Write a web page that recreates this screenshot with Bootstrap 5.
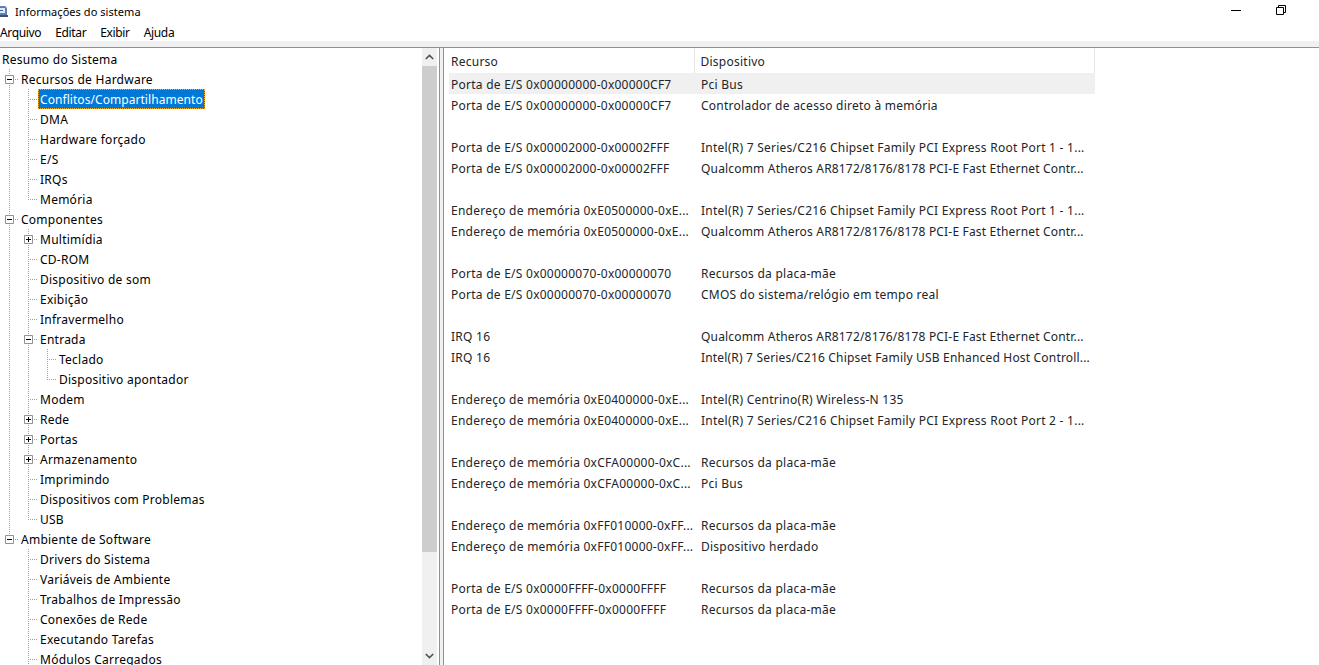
<!DOCTYPE html>
<html lang="pt-BR">
<head>
  <meta charset="UTF-8" />
  <meta name="viewport" content="width=device-width, initial-scale=1.0" />
  <title>Informações do sistema</title>
  <link href="https://cdn.jsdelivr.net/npm/bootstrap@5.3.0/dist/css/bootstrap.min.css" rel="stylesheet" />
  <style>
    html, body { height: 665px; overflow: hidden; }
    body { font-family: "Noto Sans", "Liberation Sans", sans-serif; font-size: 12px; letter-spacing: .25px; color: #000; background: #fff; line-height: 20px; }
    .title-bar { height: 23px; }
    .title-bar .win-title { margin-left: 7px; font-size: 11px; letter-spacing: .05px; }
    .win-btns { gap: 35px; margin-right: 33px; margin-bottom: 4px; }
    .menu-line { height: 18px; gap: 14px; letter-spacing: -.35px; }
    .menu-strip { height: 6px; background: #f0f0f0; }
    .panes { height: 618px; border-top: 1px solid #8f8f96; }
    .tree-pane { width: 440px; border-right: 1px solid #8f8f96; }
    .tree-body { width: 422px; padding-top: 1px; overflow: hidden; }
    .tree-row { height: 20px; white-space: nowrap; }
    .tree-label { padding: 0 2px; height: 20px; line-height: 21px; }
    .tree-label.picked { background: #0078d7; color: #fff; outline: 1px dotted #f5a623; outline-offset: -1px; letter-spacing: .06px; }
    .gd { width: 19px; height: 20px; flex: none; display: flex; background-repeat: no-repeat; }
    .gd-i { background-image: repeating-linear-gradient(to bottom, #a0a0a0 0 1px, transparent 1px 2px); background-size: 1px 100%; background-position: 9px 0; }
    .gd-t { background-image: repeating-linear-gradient(to bottom, #a0a0a0 0 1px, transparent 1px 2px), repeating-linear-gradient(to right, #a0a0a0 0 1px, transparent 1px 2px); background-size: 1px 100%, 9px 1px; background-position: 9px 0, 9px 10px; }
    .gd-l { background-image: repeating-linear-gradient(to bottom, #a0a0a0 0 1px, transparent 1px 2px), repeating-linear-gradient(to right, #a0a0a0 0 1px, transparent 1px 2px); background-size: 1px 10px, 9px 1px; background-position: 9px 0, 9px 10px; }
    .gd svg { margin: 6px 0 0 5px; display: block; }
    .tree-scroll { width: 15px; background: #f0f0f0; }
    .scroll-arrow { height: 18px; }
    .scroll-thumb { height: 486px; background: #cdcdcd; }
    .split-gap { width: 3px; background: #f0f0f0; }
    .list-pane { border-left: 1px solid #8f8f96; padding-left: 5px; }
    .sys-table { width: 646px; table-layout: fixed; margin: 0; --bs-table-bg: transparent; }
    .sys-table th, .sys-table td { padding: 3px 0 0 2px; font-weight: 400; height: 21px; line-height: 18px; white-space: nowrap; overflow: hidden; border: 0; }
    .sys-table th { height: 25px; padding: 0 0 1px 2px; line-height: 20px; border-right: 1px solid #e5e5e5; }
    .sys-table th + th { padding-left: 6px; }
    .sys-table td + td { padding-left: 7px; }
    .sys-table td.tight { letter-spacing: .18px; }
    .sys-table th:first-child, .sys-table td:first-child { width: 245px; }
    .sys-table tr.hot td { background: #f0f0f0; }
  </style>
</head>
<body>
  <div class="title-bar d-flex align-items-center justify-content-between">
    <div class="d-flex align-items-center">
      <svg width="8" height="13" viewBox="0 0 8 13"><path d="M0 1h5l2 2v7H0z" fill="#5b7fb8"/><path d="M0 3h5v5H0z" fill="#dfe8f5"/><path d="M0 10h8v2H0z" fill="#3d4f73"/><path d="M0 5h3v1H0z" fill="#4a5f8a"/></svg>
      <span class="win-title">Informações do sistema</span>
    </div>
    <div class="win-btns d-flex align-items-center">
      <svg width="10" height="10" viewBox="0 0 10 10"><path d="M0 5.5h10" stroke="#000" fill="none"/></svg>
      <svg width="10" height="10" viewBox="0 0 10 10"><path d="M.5 2.5h7v7h-7zM2.5 2.5v-2h7v7h-2" stroke="#000" fill="none"/></svg>
    </div>
  </div>

  <div class="menu-line d-flex">
    <span>Arquivo</span>
    <span>Editar</span>
    <span>Exibir</span>
    <span>Ajuda</span>
  </div>
  <div class="menu-strip"></div>

  <div class="panes d-flex">
    <div class="tree-pane d-flex">
      <div class="tree-body">
        <div class="tree-row d-flex"><span class="tree-label">Resumo do Sistema</span></div>
        <div class="tree-row d-flex"><span class="gd gd-t"><svg width="9" height="9" viewBox="0 0 9 9"><path d="M.5.5h8v8h-8z" fill="#fff" stroke="#919191"/><path d="M2 4.5h5" stroke="#000"/></svg></span><span class="tree-label">Recursos de Hardware</span></div>
        <div class="tree-row d-flex"><span class="gd gd-i"></span><span class="gd gd-t"></span><span class="tree-label picked">Conflitos/Compartilhamento</span></div>
        <div class="tree-row d-flex"><span class="gd gd-i"></span><span class="gd gd-t"></span><span class="tree-label">DMA</span></div>
        <div class="tree-row d-flex"><span class="gd gd-i"></span><span class="gd gd-t"></span><span class="tree-label">Hardware forçado</span></div>
        <div class="tree-row d-flex"><span class="gd gd-i"></span><span class="gd gd-t"></span><span class="tree-label">E/S</span></div>
        <div class="tree-row d-flex"><span class="gd gd-i"></span><span class="gd gd-t"></span><span class="tree-label">IRQs</span></div>
        <div class="tree-row d-flex"><span class="gd gd-i"></span><span class="gd gd-l"></span><span class="tree-label">Memória</span></div>
        <div class="tree-row d-flex"><span class="gd gd-t"><svg width="9" height="9" viewBox="0 0 9 9"><path d="M.5.5h8v8h-8z" fill="#fff" stroke="#919191"/><path d="M2 4.5h5" stroke="#000"/></svg></span><span class="tree-label">Componentes</span></div>
        <div class="tree-row d-flex"><span class="gd gd-i"></span><span class="gd gd-t"><svg width="9" height="9" viewBox="0 0 9 9"><path d="M.5.5h8v8h-8z" fill="#fff" stroke="#919191"/><path d="M2 4.5h5M4.5 2v5" stroke="#000"/></svg></span><span class="tree-label">Multimídia</span></div>
        <div class="tree-row d-flex"><span class="gd gd-i"></span><span class="gd gd-t"></span><span class="tree-label">CD-ROM</span></div>
        <div class="tree-row d-flex"><span class="gd gd-i"></span><span class="gd gd-t"></span><span class="tree-label">Dispositivo de som</span></div>
        <div class="tree-row d-flex"><span class="gd gd-i"></span><span class="gd gd-t"></span><span class="tree-label">Exibição</span></div>
        <div class="tree-row d-flex"><span class="gd gd-i"></span><span class="gd gd-t"></span><span class="tree-label">Infravermelho</span></div>
        <div class="tree-row d-flex"><span class="gd gd-i"></span><span class="gd gd-t"><svg width="9" height="9" viewBox="0 0 9 9"><path d="M.5.5h8v8h-8z" fill="#fff" stroke="#919191"/><path d="M2 4.5h5" stroke="#000"/></svg></span><span class="tree-label">Entrada</span></div>
        <div class="tree-row d-flex"><span class="gd gd-i"></span><span class="gd gd-i"></span><span class="gd gd-t"></span><span class="tree-label">Teclado</span></div>
        <div class="tree-row d-flex"><span class="gd gd-i"></span><span class="gd gd-i"></span><span class="gd gd-l"></span><span class="tree-label">Dispositivo apontador</span></div>
        <div class="tree-row d-flex"><span class="gd gd-i"></span><span class="gd gd-t"></span><span class="tree-label">Modem</span></div>
        <div class="tree-row d-flex"><span class="gd gd-i"></span><span class="gd gd-t"><svg width="9" height="9" viewBox="0 0 9 9"><path d="M.5.5h8v8h-8z" fill="#fff" stroke="#919191"/><path d="M2 4.5h5M4.5 2v5" stroke="#000"/></svg></span><span class="tree-label">Rede</span></div>
        <div class="tree-row d-flex"><span class="gd gd-i"></span><span class="gd gd-t"><svg width="9" height="9" viewBox="0 0 9 9"><path d="M.5.5h8v8h-8z" fill="#fff" stroke="#919191"/><path d="M2 4.5h5M4.5 2v5" stroke="#000"/></svg></span><span class="tree-label">Portas</span></div>
        <div class="tree-row d-flex"><span class="gd gd-i"></span><span class="gd gd-t"><svg width="9" height="9" viewBox="0 0 9 9"><path d="M.5.5h8v8h-8z" fill="#fff" stroke="#919191"/><path d="M2 4.5h5M4.5 2v5" stroke="#000"/></svg></span><span class="tree-label">Armazenamento</span></div>
        <div class="tree-row d-flex"><span class="gd gd-i"></span><span class="gd gd-t"></span><span class="tree-label">Imprimindo</span></div>
        <div class="tree-row d-flex"><span class="gd gd-i"></span><span class="gd gd-t"></span><span class="tree-label">Dispositivos com Problemas</span></div>
        <div class="tree-row d-flex"><span class="gd gd-i"></span><span class="gd gd-l"></span><span class="tree-label">USB</span></div>
        <div class="tree-row d-flex"><span class="gd gd-l"><svg width="9" height="9" viewBox="0 0 9 9"><path d="M.5.5h8v8h-8z" fill="#fff" stroke="#919191"/><path d="M2 4.5h5" stroke="#000"/></svg></span><span class="tree-label">Ambiente de Software</span></div>
        <div class="tree-row d-flex"><span class="gd"></span><span class="gd gd-t"></span><span class="tree-label">Drivers do Sistema</span></div>
        <div class="tree-row d-flex"><span class="gd"></span><span class="gd gd-t"></span><span class="tree-label">Variáveis de Ambiente</span></div>
        <div class="tree-row d-flex"><span class="gd"></span><span class="gd gd-t"></span><span class="tree-label">Trabalhos de Impressão</span></div>
        <div class="tree-row d-flex"><span class="gd"></span><span class="gd gd-t"></span><span class="tree-label">Conexões de Rede</span></div>
        <div class="tree-row d-flex"><span class="gd"></span><span class="gd gd-t"></span><span class="tree-label">Executando Tarefas</span></div>
        <div class="tree-row d-flex"><span class="gd"></span><span class="gd gd-t"></span><span class="tree-label">Módulos Carregados</span></div>
      </div>
      <div class="tree-scroll d-flex flex-column">
        <div class="scroll-arrow d-flex align-items-center justify-content-center"><svg width="9" height="6" viewBox="0 0 9 6"><path d="M.8 5 4.5 1.4 8.2 5" stroke="#505050" stroke-width="1.6" fill="none"/></svg></div>
        <div class="scroll-thumb"></div>
        <div class="flex-grow-1"></div>
        <div class="scroll-arrow d-flex align-items-center justify-content-center"><svg width="9" height="6" viewBox="0 0 9 6"><path d="M.8 1 4.5 4.6 8.2 1" stroke="#505050" stroke-width="1.6" fill="none"/></svg></div>
      </div>
    </div>
    <div class="split-gap"></div>
    <div class="list-pane flex-grow-1">
      <table class="table sys-table">
        <thead><tr><th>Recurso</th><th>Dispositivo</th></tr></thead>
        <tbody>
          <tr class="hot"><td>Porta de E/S 0x00000000-0x00000CF7</td><td>Pci Bus</td></tr>
          <tr><td>Porta de E/S 0x00000000-0x00000CF7</td><td>Controlador de acesso direto à memória</td></tr>
          <tr><td></td><td></td></tr>
          <tr><td>Porta de E/S 0x00002000-0x00002FFF</td><td>Intel(R) 7 Series/C216 Chipset Family PCI Express Root Port 1 - 1...</td></tr>
          <tr><td>Porta de E/S 0x00002000-0x00002FFF</td><td class="tight">Qualcomm Atheros AR8172/8176/8178 PCI-E Fast Ethernet Contr...</td></tr>
          <tr><td></td><td></td></tr>
          <tr><td>Endereço de memória 0xE0500000-0xE...</td><td>Intel(R) 7 Series/C216 Chipset Family PCI Express Root Port 1 - 1...</td></tr>
          <tr><td>Endereço de memória 0xE0500000-0xE...</td><td class="tight">Qualcomm Atheros AR8172/8176/8178 PCI-E Fast Ethernet Contr...</td></tr>
          <tr><td></td><td></td></tr>
          <tr><td>Porta de E/S 0x00000070-0x00000070</td><td>Recursos da placa-mãe</td></tr>
          <tr><td>Porta de E/S 0x00000070-0x00000070</td><td>CMOS do sistema/relógio em tempo real</td></tr>
          <tr><td></td><td></td></tr>
          <tr><td>IRQ 16</td><td class="tight">Qualcomm Atheros AR8172/8176/8178 PCI-E Fast Ethernet Contr...</td></tr>
          <tr><td>IRQ 16</td><td class="tight">Intel(R) 7 Series/C216 Chipset Family USB Enhanced Host Controll...</td></tr>
          <tr><td></td><td></td></tr>
          <tr><td>Endereço de memória 0xE0400000-0xE...</td><td>Intel(R) Centrino(R) Wireless-N 135</td></tr>
          <tr><td>Endereço de memória 0xE0400000-0xE...</td><td>Intel(R) 7 Series/C216 Chipset Family PCI Express Root Port 2 - 1...</td></tr>
          <tr><td></td><td></td></tr>
          <tr><td>Endereço de memória 0xCFA00000-0xC...</td><td>Recursos da placa-mãe</td></tr>
          <tr><td>Endereço de memória 0xCFA00000-0xC...</td><td>Pci Bus</td></tr>
          <tr><td></td><td></td></tr>
          <tr><td>Endereço de memória 0xFF010000-0xFF...</td><td>Recursos da placa-mãe</td></tr>
          <tr><td>Endereço de memória 0xFF010000-0xFF...</td><td>Dispositivo herdado</td></tr>
          <tr><td></td><td></td></tr>
          <tr><td>Porta de E/S 0x0000FFFF-0x0000FFFF</td><td>Recursos da placa-mãe</td></tr>
          <tr><td>Porta de E/S 0x0000FFFF-0x0000FFFF</td><td>Recursos da placa-mãe</td></tr>
        </tbody>
      </table>
    </div>
  </div>
  <script src="https://cdn.jsdelivr.net/npm/bootstrap@5.3.0/dist/js/bootstrap.bundle.min.js"></script>
</body>
</html>
